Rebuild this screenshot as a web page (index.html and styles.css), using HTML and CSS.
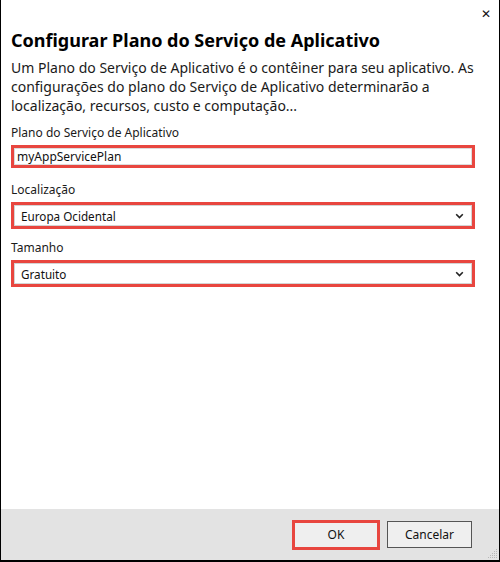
FILE: index.html
```html
<!DOCTYPE html>
<html lang="pt">
<head>
<meta charset="utf-8">
<link rel="stylesheet" href="styles.css">
</head>
<body>
<div class="window">
  <div class="titlebar">
    <span class="close">✕</span>
  </div>
  <div class="content">
    <h1 class="title">Configurar Plano do Serviço de Aplicativo</h1>
    <p class="desc">Um Plano do Serviço de Aplicativo é o contêiner para seu aplicativo. As configurações do plano do Serviço de Aplicativo determinarão a localização, recursos, custo e computação...</p>
    <div class="field f1">
      <label class="label">Plano do Serviço de Aplicativo</label>
      <div class="box"><div class="inner input">myAppServicePlan</div></div>
    </div>
    <div class="field f2">
      <label class="label">Localização</label>
      <div class="box"><div class="inner select"><span>Europa Ocidental</span>
        <svg class="chev" width="9" height="6" viewBox="0 0 9 6"><path d="M1.2 1.2 L4.5 4.5 L7.8 1.2" fill="none" stroke="#222" stroke-width="1.6"/></svg></div></div>
    </div>
    <div class="field f3">
      <label class="label">Tamanho</label>
      <div class="box"><div class="inner select"><span>Gratuito</span>
        <svg class="chev" width="9" height="6" viewBox="0 0 9 6"><path d="M1.2 1.2 L4.5 4.5 L7.8 1.2" fill="none" stroke="#222" stroke-width="1.6"/></svg></div></div>
    </div>
  </div>
  <div class="footer">
    <div class="btn-wrap"><button class="btn ok">OK</button></div>
    <button class="btn cancel">Cancelar</button>
    <svg class="grip" width="10" height="10" viewBox="0 0 10 10">
      <g fill="#b8b8b8">
        <rect x="8" y="0" width="1" height="1"/>
        <rect x="6" y="2" width="1" height="1"/><rect x="8" y="2" width="1" height="1"/>
        <rect x="4" y="4" width="1" height="1"/><rect x="6" y="4" width="1" height="1"/><rect x="8" y="4" width="1" height="1"/>
        <rect x="2" y="6" width="1" height="1"/><rect x="4" y="6" width="1" height="1"/><rect x="6" y="6" width="1" height="1"/><rect x="8" y="6" width="1" height="1"/>
        <rect x="0" y="8" width="1" height="1"/><rect x="2" y="8" width="1" height="1"/><rect x="4" y="8" width="1" height="1"/><rect x="6" y="8" width="1" height="1"/><rect x="8" y="8" width="1" height="1"/>
      </g>
    </svg>
  </div>
</div>
</body>
</html>
```
FILE: styles.css
```css
* { box-sizing: border-box; }
html, body { margin: 0; padding: 0; background: #fff; }
body { font-family: "Noto Sans", "Open Sans", sans-serif; color: #1a1a1a; }
.window {
  width: 500px;
  height: 562px;
  border: 1px solid #000;
  border-top: none;
  border-bottom-width: 2px;
  display: flex;
  flex-direction: column;
  background: #fff;
}
.titlebar {
  height: 28px;
  display: flex;
  justify-content: flex-end;
  align-items: center;
  padding-right: 8px;
}
.close { font-size: 12px; color: #111; line-height: 1; }
.content { flex: 1; padding: 0 10px; }
.title {
  margin: 0;
  font-size: 18px;
  font-weight: 700;
  line-height: 24px;
  color: #000;
}
.desc {
  margin: 6px 0 0;
  font-size: 14px;
  line-height: 19px;
  color: #1a1a1a;
}
.f1 { margin-top: 10px; }
.f2 { margin-top: 14px; }
.f3 { margin-top: 11px; }
.label { display: block; font-size: 12px; line-height: 16px; margin-bottom: 4px; color: #1a1a1a; }
.box {
  width: 464px;
  border: 3px solid #e8463f;
}
.inner {
  border: 1px solid #d4d4d4;
  display: flex;
  align-items: center;
  color: #111;
}
.input { height: 17px; padding-left: 2px; font-size: 12px; border-color: #dcdcdc; }
.select { height: 21px; padding-left: 6px; padding-right: 7px; justify-content: space-between; font-size: 11.7px; }
.footer {
  height: 51px;
  background: #e3e3e3;
  display: flex;
  justify-content: flex-end;
  align-items: center;
  padding-right: 27px;
  gap: 7px;
  position: relative;
}
.btn {
  font-family: inherit;
  font-size: 12px;
  color: #111;
  background: #efefef;
  border: 1px solid #555;
  padding: 0;
}
.btn-wrap { border: 3px solid #e8463f; }
.ok { border: none; width: 82px; height: 24px; display: block; }
.cancel { width: 85px; height: 27px; }
.grip { position: absolute; right: 1px; bottom: 1px; }
```
